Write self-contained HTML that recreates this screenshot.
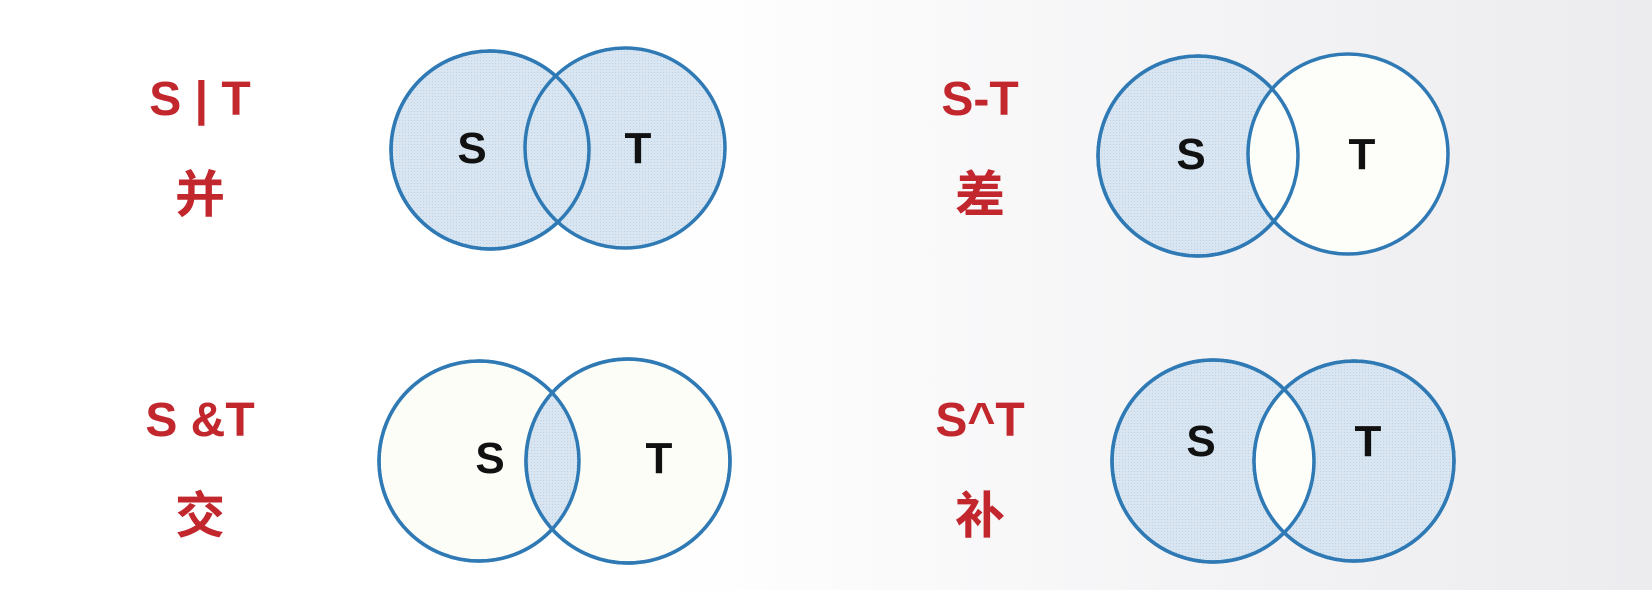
<!DOCTYPE html>
<html><head><meta charset="utf-8"><style>
html,body{margin:0;padding:0}
body{width:1652px;height:590px;overflow:hidden;position:relative;background:linear-gradient(90deg,#ffffff 0%,#ffffff 40%,#f3f3f5 75%,#ececef 100%);font-family:"Liberation Sans","Noto Sans CJK SC",sans-serif}
.l{position:absolute;color:#c1272d;font-size:48px;font-weight:bold;line-height:50px;height:50px;text-align:center;width:200px;white-space:nowrap}
.c{font-size:50px;font-weight:bold}
svg{position:absolute;left:0;top:0}
</style></head><body>
<svg width="1652" height="590" viewBox="0 0 1652 590">
<defs>
<pattern id="p" width="3" height="3" patternUnits="userSpaceOnUse"><rect width="3" height="3" fill="#d9e6f1"/><rect width="1" height="1" fill="#bcd2e6"/></pattern>
<clipPath id="c2"><circle cx="479" cy="461" r="100"/></clipPath>
<clipPath id="c3"><circle cx="1213" cy="461" r="101"/></clipPath>
</defs>
<g stroke="#2f7ab5" stroke-width="3.5">
<circle cx="490" cy="150" r="99" fill="url(#p)"/>
<circle cx="625" cy="148" r="100" fill="url(#p)"/>
<circle cx="490" cy="150" r="99" fill="none"/>
<circle cx="1198" cy="156" r="100" fill="url(#p)"/>
<circle cx="1348" cy="154" r="100" fill="#fdfdfa"/>
<circle cx="1198" cy="156" r="100" fill="none"/>
<circle cx="479" cy="461" r="100" fill="#fdfdf8"/>
<circle cx="628" cy="461" r="102" fill="#fdfdf8"/>
<circle cx="628" cy="461" r="102" fill="url(#p)" stroke="none" clip-path="url(#c2)"/>
<circle cx="479" cy="461" r="100" fill="none"/>
<circle cx="628" cy="461" r="102" fill="none"/>
<circle cx="1213" cy="461" r="101" fill="url(#p)"/>
<circle cx="1354" cy="461" r="100" fill="url(#p)"/>
<circle cx="1354" cy="461" r="100" fill="#fdfdfa" stroke="none" clip-path="url(#c3)"/>
<circle cx="1213" cy="461" r="101" fill="none"/>
<circle cx="1354" cy="461" r="100" fill="none"/>
</g>
<g font-family="Liberation Sans, sans-serif" font-weight="bold" font-size="44" fill="#111" text-anchor="middle">
<text x="472" y="163">S</text><text x="638" y="163">T</text>
<text x="1191" y="169">S</text><text x="1362" y="169">T</text>
<text x="490" y="473">S</text><text x="659" y="473">T</text>
<text x="1201" y="456">S</text><text x="1368" y="456">T</text>
</g>
</svg>
<div class="l" style="left:100px;top:75px">S | T</div>
<div class="l c" style="left:100px;top:170px">并</div>
<div class="l" style="left:880px;top:75px">S-T</div>
<div class="l c" style="left:880px;top:170px">差</div>
<div class="l" style="left:100px;top:396px">S &amp;T</div>
<div class="l c" style="left:100px;top:491px">交</div>
<div class="l" style="left:880px;top:396px">S^T</div>
<div class="l c" style="left:880px;top:491px">补</div>
</body></html>
